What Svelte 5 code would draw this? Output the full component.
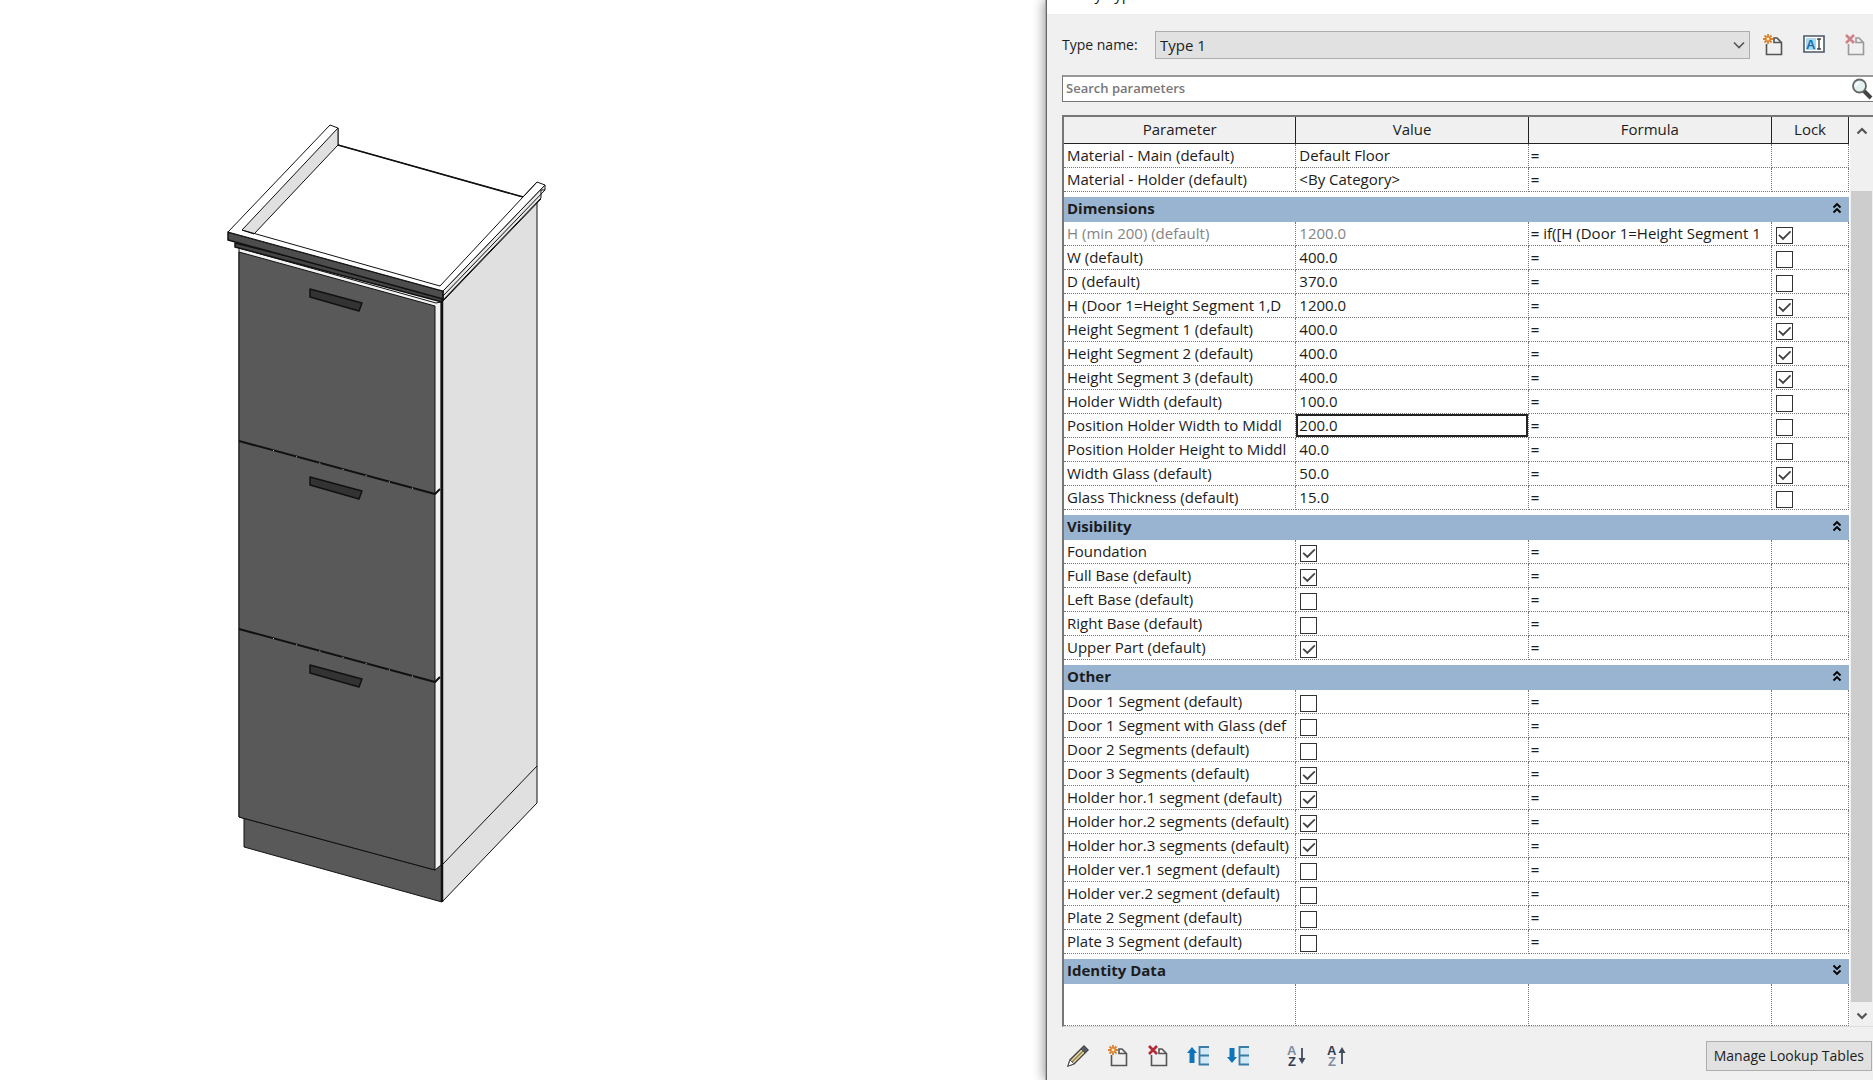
<script>
    let typeName = 'Type 1';
    let search = '';
    let selected = 'Position Holder Width to Middl';

    // lock: undefined = geen slotje in deze rij
    let groups = [
        {
            name: '',
            open: true,
            rows: [
                { name: 'Material - Main (default)', value: 'Default Floor' },
                { name: 'Material - Holder (default)', value: '<By Category>' }
            ]
        },
        {
            name: 'Dimensions',
            open: true,
            rows: [
                { name: 'H (min 200) (default)', value: '1200.0', formula: 'if([H (Door 1=Height Segment 1', lock: true, disabled: true },
                { name: 'W (default)', value: '400.0', lock: false },
                { name: 'D (default)', value: '370.0', lock: false },
                { name: 'H (Door 1=Height Segment 1,D', value: '1200.0', lock: true },
                { name: 'Height Segment 1 (default)', value: '400.0', lock: true },
                { name: 'Height Segment 2 (default)', value: '400.0', lock: true },
                { name: 'Height Segment 3 (default)', value: '400.0', lock: true },
                { name: 'Holder Width (default)', value: '100.0', lock: false },
                { name: 'Position Holder Width to Middl', value: '200.0', lock: false },
                { name: 'Position Holder Height to Middl', value: '40.0', lock: false },
                { name: 'Width Glass (default)', value: '50.0', lock: true },
                { name: 'Glass Thickness (default)', value: '15.0', lock: false }
            ]
        },
        {
            name: 'Visibility',
            open: true,
            rows: [
                { name: 'Foundation', value: true },
                { name: 'Full Base (default)', value: true },
                { name: 'Left Base (default)', value: false },
                { name: 'Right Base (default)', value: false },
                { name: 'Upper Part (default)', value: true }
            ]
        },
        {
            name: 'Other',
            open: true,
            rows: [
                { name: 'Door 1 Segment (default)', value: false },
                { name: 'Door 1 Segment with Glass (def', value: false },
                { name: 'Door 2 Segments (default)', value: false },
                { name: 'Door 3 Segments (default)', value: true },
                { name: 'Holder hor.1 segment (default)', value: true },
                { name: 'Holder hor.2 segments (default)', value: true },
                { name: 'Holder hor.3 segments (default)', value: true },
                { name: 'Holder ver.1 segment (default)', value: false },
                { name: 'Holder ver.2 segment (default)', value: false },
                { name: 'Plate 2 Segment (default)', value: false },
                { name: 'Plate 3 Segment (default)', value: false }
            ]
        },
        { name: 'Identity Data', open: false, rows: [] }
    ];

    const doors = [0, 188, 376];

    function toggleGroup(group) {
        group.open = !group.open;
        groups = groups;
    }

    function matches(row) {
        return row.name.toLowerCase().includes(search.toLowerCase());
    }
</script>

<main class="screen">
    <section class="viewport" aria-label="3D view">
        <svg class="cabinet" viewBox="0 0 1047 1080" stroke="#111" stroke-linejoin="round">
            <!-- side panel and plinth -->
            <path d="M442 302L537 200V803L442 902Z" fill="#e0e0e0" />
            <path d="M442 865L537 766" fill="none" />
            <path d="M244 812V847L442 902V860Z" fill="#595959" />

            <!-- edge of the doors -->
            <path d="M239 248L436 303L441 302V865L435 870L239 817Z" fill="#f2f2f2" />
            <path d="M239 252L435 306V870L239 817Z" fill="#595959" />
            {#each doors as y}
                <path d="M310 {289 + y}L362 {303 + y}L359 {311 + y}L310 {297 + y}Z" fill="#333" stroke-width="1.5" />
            {/each}
            <path d="M239 441L435 494L440 489M239 629L435 682L440 677" fill="none" stroke-width="2" />
            <path d="M273 450.500L420 490.200M273 638.500L420 678.200" fill="none" stroke="#ccc" stroke-dasharray="1 23" />
            <path d="M442 300V902" stroke-width="2.5" />

            <!-- worktop -->
            <path d="M443 300L541 198V190L545 190V185L443 291Z" fill="#e8e8e8" />
            <path d="M443 296L545 190M443 301L541 199" fill="none" />
            <path d="M235 243V247L442 302V294Z" fill="#444" stroke-width="1.5" />
            <path d="M228 232V240L443 299V291Z" fill="#4d4d4d" stroke-width="1.5" />
            <path d="M228 232L330 125L338 128V145L523 197L537 182L545 185L443 291Z" fill="#fff" />
            <path d="M242 230L338 128V145L254 234Z" fill="#e0e0e0" />
            <path d="M242 230L440 286L537 182" fill="none" />
            <path d="M338 145L523 197" stroke-width="1.5" />
        </svg>
    </section>

    <section class="dialog">
        <header class="titlebar"><h1>Family Types</h1></header>

        <div class="type-row">
            <label for="type-name">Type name:</label>
            <div class="select-box">
                <select id="type-name" bind:value={typeName}>
                    <option>Type 1</option>
                </select>
                <svg class="chevron" viewBox="0 0 12 8"><path d="M1 1.5L6 6.5L11 1.5" fill="none" stroke="#555" stroke-width="1.6" /></svg>
            </div>
            <div class="type-icons">
                <button class="icon" aria-label="New type">
                    <svg viewBox="0 0 24 24" fill="none">
                        <path d="M5.500 11V21.500H20.500V9.500L16 5H13V9.500H20" stroke="#555" stroke-width="1.6" />
                        <path d="M7 1V11M2 6H12M3.500 2.500L10.500 9.500M10.500 2.500L3.500 9.500" stroke="#d9812e" stroke-width="1.8" />
                        <circle cx="7" cy="6" r="2" fill="#fff0b8" stroke="#d9812e" />
                    </svg>
                </button>
                <button class="icon" aria-label="Rename type">
                    <svg viewBox="0 0 24 24" fill="none">
                        <path d="M2 3H22V19H2Z" fill="#fff" stroke="#4a5866" stroke-width="1.6" />
                        <path d="M4 5H14V17H4Z" fill="#a9d8f2" />
                        <text x="4" y="16" class="glyph blue">A</text>
                        <path d="M15 6H19M17 6V16M15 16H19" stroke="#444" stroke-width="1.4" />
                    </svg>
                </button>
                <button class="icon faded" aria-label="Delete type">
                    <svg viewBox="0 0 24 24" fill="none">
                        <path d="M5.500 11V21.500H20.500V9.500L16 5H13V9.500H20" stroke="#555" stroke-width="1.6" />
                        <path d="M3 2L11 10M11 2L3 10" stroke="#b52a35" stroke-width="2.600" />
                    </svg>
                </button>
            </div>
        </div>

        <div class="search">
            <input type="text" aria-label="Search parameters" placeholder="Search parameters" bind:value={search} />
            <svg viewBox="0 0 22 22" fill="none">
                <path d="M13 13L20 20" stroke="#444" stroke-width="4" />
                <circle cx="8.500" cy="8" r="6.500" fill="#e3f1f1" stroke="#666" stroke-width="1.8" />
                <path d="M5 8A4 4 0 0 1 8 4.500" stroke="#fff" stroke-width="1.5" />
            </svg>
        </div>

        <div class="table-box">
            <table>
                <colgroup>
                    <col class="col-name" />
                    <col class="col-value" />
                    <col class="col-formula" />
                    <col class="col-lock" />
                </colgroup>
                <thead>
                    <tr>
                        <th>Parameter</th>
                        <th>Value</th>
                        <th>Formula</th>
                        <th>Lock</th>
                    </tr>
                </thead>
                {#each groups as group, g}
                    <tbody>
                        {#if group.name}
                            <tr class="group">
                                <th colspan="4">
                                    <button on:click={() => toggleGroup(group)}>
                                        {group.name}
                                        <svg class:closed={!group.open} viewBox="0 0 10 12">
                                            <path d="M1.500 5.500L5 2L8.500 5.500M1.500 10.500L5 7L8.500 10.500" fill="none" stroke="#000" stroke-width="1.8" />
                                        </svg>
                                    </button>
                                </th>
                            </tr>
                        {/if}
                        {#if group.open}
                            {#each group.rows.filter((row) => search === '' || matches(row)) as row, r}
                                <tr class:disabled={row.disabled}>
                                    <td class="name"><label for="p{g}-{r}">{row.name}</label></td>
                                    <td class="value" class:selected={row.name === selected}>
                                        {#if typeof row.value === 'boolean'}
                                            <input id="p{g}-{r}" type="checkbox" bind:checked={row.value} />
                                        {:else}
                                            <input id="p{g}-{r}" type="text" bind:value={row.value} disabled={row.disabled} on:focus={() => (selected = row.name)} />
                                        {/if}
                                    </td>
                                    <td class="formula"><b>=</b> {row.formula ?? ''}</td>
                                    <td class="lock">
                                        {#if row.lock !== undefined}
                                            <input type="checkbox" aria-label="Lock {row.name}" bind:checked={row.lock} />
                                        {/if}
                                    </td>
                                </tr>
                            {/each}
                        {/if}
                    </tbody>
                {/each}
                <tbody>
                    <tr class="empty"><td></td><td></td><td></td><td></td></tr>
                </tbody>
            </table>
            <div class="scrollbar">
                <button aria-label="Scroll up">
                    <svg viewBox="0 0 12 8"><path d="M1.500 6.500L6 2L10.500 6.500" fill="none" stroke="#555" stroke-width="2.200" /></svg>
                </button>
                <div class="thumb"></div>
                <button aria-label="Scroll down">
                    <svg viewBox="0 0 12 8"><path d="M1.500 1.500L6 6L10.500 1.500" fill="none" stroke="#555" stroke-width="2.200" /></svg>
                </button>
            </div>
        </div>

        <footer>
            <div class="tools">
                <button class="icon" aria-label="Edit parameter">
                    <svg viewBox="0 0 24 24" fill="none">
                        <path d="M2 22L4 16L18 2L22 6L8 20Z" fill="#e8d9a0" stroke="#444" stroke-width="1.4" />
                        <path d="M15 5L18 2L22 6L19 9Z" fill="#555b66" stroke="#444" />
                        <path d="M6 18L17 7" stroke="#8d8050" stroke-width="1.4" />
                        <path d="M2 22L4 16L8 20Z" fill="#fff" stroke="#555" />
                    </svg>
                </button>
                <button class="icon" aria-label="New parameter">
                    <svg viewBox="0 0 24 24" fill="none">
                        <path d="M5.500 11V21.500H20.500V9.500L16 5H13V9.500H20" stroke="#555" stroke-width="1.6" />
                        <path d="M7 1V11M2 6H12M3.500 2.500L10.500 9.500M10.500 2.500L3.500 9.500" stroke="#d9812e" stroke-width="1.8" />
                        <circle cx="7" cy="6" r="2" fill="#fff0b8" stroke="#d9812e" />
                    </svg>
                </button>
                <button class="icon" aria-label="Delete parameter">
                    <svg viewBox="0 0 24 24" fill="none">
                        <path d="M5.500 11V21.500H20.500V9.500L16 5H13V9.500H20" stroke="#555" stroke-width="1.6" />
                        <path d="M3 2L11 10M11 2L3 10" stroke="#b52a35" stroke-width="2.600" />
                    </svg>
                </button>
                <button class="icon" aria-label="Move parameter up">
                    <svg viewBox="0 0 24 24" fill="none">
                        <path d="M14 3H23V20H14Z" fill="#d3e9f5" />
                        <path d="M23 3H13.500V20.500H23M13.500 11.500H23" stroke="#3a7ca8" stroke-width="1.8" />
                        <path d="M6 3L11 9H8.500V19H3.500V9H1Z" fill="#0f74ba" />
                    </svg>
                </button>
                <button class="icon" aria-label="Move parameter down">
                    <svg viewBox="0 0 24 24" fill="none">
                        <path d="M14 3H23V20H14Z" fill="#d3e9f5" />
                        <path d="M23 3H13.500V20.500H23M13.500 11.500H23" stroke="#3a7ca8" stroke-width="1.8" />
                        <path d="M6 19L11 13H8.500V4H3.500V13H1Z" fill="#0f74ba" />
                    </svg>
                </button>
                <button class="icon sort" aria-label="Sort ascending">
                    <svg viewBox="0 0 24 24" fill="none">
                        <text x="2" y="11" class="glyph grey">A</text>
                        <text x="3" y="22" class="glyph dark">Z</text>
                        <path d="M17 4V16" stroke="#3f4a5c" stroke-width="1.8" />
                        <path d="M13.500 14H20.500L17 20Z" fill="#3f4a5c" />
                    </svg>
                </button>
                <button class="icon" aria-label="Sort descending">
                    <svg viewBox="0 0 24 24" fill="none">
                        <text x="2" y="11" class="glyph dark">A</text>
                        <text x="3" y="22" class="glyph grey">Z</text>
                        <path d="M17 8V20" stroke="#3f4a5c" stroke-width="1.8" />
                        <path d="M13.500 9H20.500L17 3Z" fill="#3f4a5c" />
                    </svg>
                </button>
            </div>
            <button class="lookup">Manage Lookup Tables</button>
        </footer>
    </section>
</main>

<style>
    :global(body) {
        background: #fff;
        overflow: hidden;
    }

    .screen {
        display: grid;
        grid-template-columns: 1047fr 826fr;
        min-height: 100vh;
        font-family: 'Open Sans', 'Noto Sans', sans-serif;
        font-size: 15px;
        line-height: 20px;
        color: #1c1c1c;
    }

    .screen button,
    .screen input,
    .screen select {
        font: inherit;
        color: inherit;
        box-sizing: border-box;
    }

    .viewport {
        background: #fff;
    }

    .cabinet {
        display: block;
        width: 100%;
    }

    .dialog {
        display: flex;
        flex-direction: column;
        min-width: 0;
        background: #f0f0f0;
        box-shadow: -1px 0 0 #666, -2px 0 0 #aaa, -4px 0 10px rgba(0, 0, 0, 0.35);
    }

    .titlebar {
        display: flex;
        align-items: flex-end;
        box-sizing: border-box;
        height: 14px;
        padding: 0 10px 10px;
        background: #fff;
        overflow: hidden;
    }

    h1 {
        margin: 0;
        font-size: 15px;
        font-weight: 400;
    }

    .type-row {
        display: flex;
        align-items: center;
        height: 28px;
        padding: 17px 6px 16px 15px;
    }

    .type-row label {
        width: 93px;
        font-size: 14px;
    }

    .select-box {
        position: relative;
        flex: 1;
    }

    select {
        display: block;
        width: 100%;
        height: 28px;
        padding: 0 4px;
        appearance: none;
        background: #e1e1e1;
        border: 1px solid #adadad;
        border-radius: 0;
    }

    .chevron {
        position: absolute;
        right: 5px;
        top: 10px;
        width: 12px;
        height: 8px;
        pointer-events: none;
    }

    .type-icons {
        display: flex;
        gap: 17px;
        margin-left: 11px;
    }

    .icon {
        width: 24px;
        height: 24px;
        padding: 0;
        border: none;
        background: transparent;
        cursor: pointer;
    }

    .icon svg {
        display: block;
        width: 24px;
        height: 24px;
    }

    .faded {
        opacity: 0.55;
    }

    .glyph {
        font-family: 'Liberation Sans', sans-serif;
        font-size: 13px;
        font-weight: 700;
    }

    .blue {
        fill: #1b6ca8;
    }

    .grey {
        fill: #7b8ca3;
    }

    .dark {
        fill: #2f3b50;
    }

    .search {
        display: flex;
        align-items: center;
        box-sizing: border-box;
        height: 27px;
        margin: 0 0 13px 15px;
        background: #fff;
        border: 1px solid #777;
        border-top: 2px solid #999;
        border-right: none;
    }

    .screen .search input {
        flex: 1;
        min-width: 0;
        height: 24px;
        padding: 0 3px 3px;
        border: none;
        outline: none;
        background: transparent;
        font-size: 13px;
        font-weight: 600;
    }

    .search input::placeholder {
        color: #777;
        opacity: 1;
    }

    .search svg {
        width: 22px;
        height: 22px;
    }

    .table-box {
        display: flex;
        margin-left: 15px;
        background: #fff;
        border-top: 2px solid #777;
        border-left: 2px solid #777;
        border-bottom: 1px solid #ddd;
    }

    table {
        flex: 1;
        width: 100%;
        table-layout: fixed;
        border-collapse: separate;
        border-spacing: 0;
    }

    .col-name,
    .col-value {
        width: 29.6%;
    }

    .col-formula {
        width: 31%;
    }

    .col-lock {
        width: 9.8%;
    }

    th,
    td {
        box-sizing: border-box;
        height: 24px;
        padding: 0;
        overflow: hidden;
        white-space: nowrap;
        text-align: left;
        vertical-align: top;
    }

    thead th {
        height: 27px;
        padding-top: 2px;
        font-weight: 400;
        text-align: center;
        background: #f0f0f0;
        border-right: 1px solid #222;
        border-bottom: 1px solid #222;
    }

    td {
        border-right: 1px dotted #777;
        border-bottom: 1px dotted #777;
    }

    .name {
        padding-left: 3px;
    }

    .name label {
        display: block;
        line-height: 22px;
    }

    .value input[type='text'] {
        display: block;
        width: 100%;
        height: 23px;
        padding: 0 3px 1px;
        border: none;
        outline: none;
        background: transparent;
    }

    .value.selected input[type='text'] {
        padding: 0 1px 1px;
        border: 2px solid #222;
    }

    .formula {
        padding-left: 2px;
        line-height: 22px;
    }

    .formula b {
        font-weight: 600;
    }

    .disabled .name,
    .disabled .value {
        color: #848484;
    }

    input[type='checkbox'] {
        display: block;
        width: 17px;
        height: 17px;
        margin: 5px 0 0 4px;
        appearance: none;
        background: #fff;
        border: 1px solid #333;
    }

    input[type='checkbox']:checked::after {
        content: '';
        display: block;
        width: 15px;
        height: 15px;
        background: #444;
        clip-path: polygon(8% 50%, 16% 42%, 40% 64%, 86% 18%, 94% 26%, 40% 82%);
    }

    .group th {
        height: 30px;
        border-top: 5px solid #fff;
        background: #99b4d1;
        background-clip: padding-box;
    }

    .screen .group button {
        display: flex;
        align-items: center;
        justify-content: space-between;
        width: 100%;
        height: 25px;
        padding: 0 7px 3px 3px;
        border: none;
        background: transparent;
        font-weight: 700;
        cursor: pointer;
    }

    .group svg {
        width: 10px;
        height: 12px;
    }

    .group svg.closed {
        transform: rotate(180deg);
    }

    .empty td {
        height: 42px;
    }

    .scrollbar {
        display: flex;
        flex-direction: column;
        width: 21px;
        padding: 0 1px;
        background: #f0f0f0;
        border-left: 1px solid #fff;
    }

    .scrollbar button {
        height: 24px;
        padding: 0;
        border: none;
        background: transparent;
    }

    .scrollbar svg {
        width: 12px;
        height: 8px;
    }

    .thumb {
        flex: 1;
        margin-top: 50px;
        background: #cdcdcd;
    }

    footer {
        display: flex;
        align-items: center;
        justify-content: space-between;
        flex: 1;
        padding: 4px 1px 0 19px;
    }

    .tools {
        display: flex;
        gap: 16px;
    }

    .sort {
        margin-left: 19px;
    }

    .screen .lookup {
        height: 30px;
        padding: 0 7px;
        background: #e1e1e1;
        border: 1px solid #adadad;
        font-size: 14px;
        white-space: nowrap;
    }
</style>
